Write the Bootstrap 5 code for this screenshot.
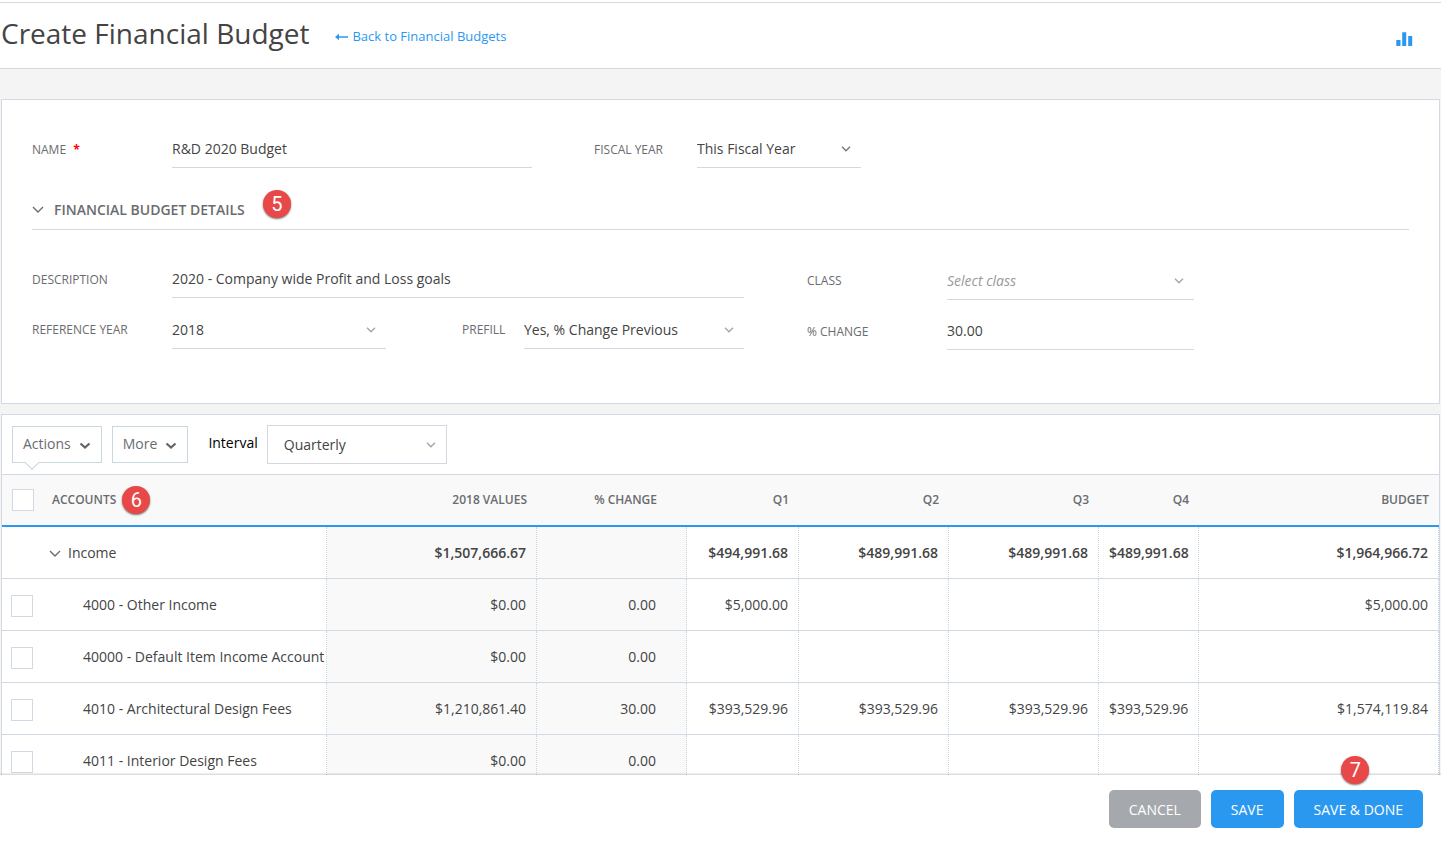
<!DOCTYPE html>
<html lang="en">
<head>
<meta charset="utf-8">
<meta name="viewport" content="width=device-width, initial-scale=1">
<title>Create Financial Budget</title>
<link rel="stylesheet" href="https://cdn.jsdelivr.net/npm/bootstrap@5.3.0/dist/css/bootstrap.min.css">
<style>
  :root {
    --line: #d3d9e2;
    --accent: #2b98f0;
    --ink: #444;
    --muted: #6a6c6f;
  }
  body {
    font-family: "Open Sans", "Noto Sans", sans-serif;
    font-size: 14px;
    line-height: 20px;
    color: var(--ink);
    background: #f4f4f4;
  }
  a { color: var(--accent); }

  .page-scroll { scrollbar-width: none; }
  .page-scroll::-webkit-scrollbar { display: none; }

  .head-wrap { background: #fff; padding-top: 2px; }
  .page-head {
    border-top: 1px solid var(--line);
    border-bottom: 1px solid var(--line);
    height: 67px;
    padding: 0 28px 0 1px;
  }
  .page-head h1 { font-size: 28px; line-height: 60px; }
  .back-link { font-size: 13px; line-height: 67px; margin-left: 26px; }
  .chart-link { padding-top: 6px; }

  .panel { background: #fff; border: 1px solid var(--line); margin: 0 1px; }
  .panel-form { margin-top: 30px; padding: 30px 30px 53px; }
  .panel-table { margin-top: 10px; border-bottom: 0; }

  /* Form grids */
  .grid-top { display: grid; grid-template-columns: 140px 360fr 165px 164fr 548fr; align-items: center; }
  .grid-details { display: grid; grid-template-columns: 712fr 63px 387fr 215fr; margin-top: 30px; align-items: start; }
  .stack-right { grid-column: 3; padding-top: 2px; row-gap: 12px; }
  .stack-left { row-gap: 13px; }
  .field-row { display: grid; grid-template-columns: 140px 1fr; align-items: center; }
  .field-trio { grid-template-columns: 140px 214fr 138px 220fr; }
  .cap { font-size: 12px; color: var(--muted); text-transform: uppercase; }
  .cap-low { padding-top: 2px; }
  .cap-fiscal { padding-left: 62px; }
  .cap-prefill { padding-left: 76px; }
  .required { color: #f00; font-weight: 700; margin-left: 4px; }

  .line-field {
    font-size: 14px;
    line-height: 20px;
    height: 38px;
    color: var(--ink);
    border: 0;
    border-bottom: 1px solid var(--line);
    border-radius: 0;
    background-color: transparent;
    padding: 8px 0 9px;
  }
  select.line-field { padding: 9px 0 8px; }
  .form-select {
    background-image: url("data:image/svg+xml,%3Csvg xmlns='http://www.w3.org/2000/svg' viewBox='0 0 10 6'%3E%3Cpath d='M1 .8l4 4 4-4' fill='none' stroke='%23a3a7ab' stroke-width='1.4'/%3E%3C/svg%3E");
    background-size: 10px 6px;
    background-position: right 10px center;
  }
  .dark-arrow {
    background-image: url("data:image/svg+xml,%3Csvg xmlns='http://www.w3.org/2000/svg' viewBox='0 0 10 6'%3E%3Cpath d='M1 .8l4 4 4-4' fill='none' stroke='%2377797c' stroke-width='1.4'/%3E%3C/svg%3E");
  }
  .unset { font-style: italic; color: #999; }

  .section-head {
    height: 40px;
    margin-top: 22px;
    border-bottom: 1px solid var(--line);
  }
  .section-head h2 { font-size: 14px; line-height: 20px; font-weight: 600; color: var(--muted); }
  .section-head svg { margin-right: 10px; }

  /* Numbered callouts */
  .callout {
    position: absolute;
    width: 28px;
    height: 28px;
    border-radius: 50%;
    background: #e84848;
    color: #fff;
    font: 400 20px/28px Roboto, Arial, sans-serif;
    text-align: center;
    box-shadow: 0 1px 2px rgba(0, 0, 0, .55);
  }
  .callout-section { left: 100%; bottom: 2px; margin-left: 18px; }
  .callout-head { left: 100%; top: -5px; margin-left: 6px; }
  .callout-done { left: 50%; top: -34px; margin-left: -17px; }

  /* Toolbar */
  .toolbar { height: 59px; padding: 0 10px; }
  .tool-btn {
    height: 37px;
    font-size: 14px;
    line-height: 20px;
    color: var(--muted);
    background: #fff;
    border: 1px solid #c8d7e0;
    border-radius: 0;
    padding: 0 10px 2px;
  }
  .tool-btn + .tool-btn { margin-left: 10px; }
  .tool-btn svg { margin: 5px 0 0 8px; }
  .has-notch::after {
    content: "";
    position: absolute;
    left: 14px;
    bottom: -6px;
    width: 10px;
    height: 10px;
    background: #fff;
    border: solid #c8d7e0;
    border-width: 0 1px 1px 0;
    transform: rotate(45deg);
  }
  .interval-label { color: #000; margin: 0 9px 3px 20px; }
  .interval-select {
    width: 180px;
    height: 39px;
    font-size: 14px;
    line-height: 20px;
    color: var(--ink);
    border: 1px solid var(--line);
    border-radius: 0;
    padding: 0 30px 0 16px;
  }

  /* Budget table */
  .budget { table-layout: fixed; width: 100%; border-collapse: separate; border-spacing: 0; }
  .budget th, .budget td { text-align: right; white-space: nowrap; vertical-align: middle; }
  .budget thead th {
    height: 53px;
    font-size: 12px;
    font-weight: 600;
    color: var(--muted);
    background: #f9f9f9;
    border-top: 1px solid var(--line);
    border-bottom: 2px solid var(--accent);
    padding: 0 10px;
  }
  .budget tbody th, .budget tbody td {
    height: 52px;
    padding: 0 10px;
    font-weight: 400;
    border-bottom: 1px solid var(--line);
    border-right: 1px dotted #c9d5e3;
  }
  .budget tbody td:first-child { border-right: 0; padding: 2px 0 0 9px; }
  .budget .total td { font-weight: 600; }
  .budget tr > :nth-child(4) { padding-right: 30px; }
  .budget .shade { background: #f9f9f9; }
  .budget thead .pick-cell { text-align: left; }
  .budget .name { text-align: left; }
  .budget tbody .name { padding: 0 0 0 41px; }
  .budget tbody .total .name { padding-left: 7px; }
  .total .name svg { margin-right: 7px; }
  .budget td:first-child { text-align: left; }
  .pick {
    width: 22px;
    height: 22px;
    margin: 0;
    display: block;
    border: 1px solid var(--line);
    border-radius: 0 !important;
    background-color: #fff;
  }

  /* Footer actions */
  .action-bar {
    position: relative;
    z-index: 1;
    gap: 10px;
    background: #fff;
    padding: 15px 18px;
    box-shadow: 0 -1px 2px rgba(0, 0, 0, .2);
  }
  .act {
    height: 38px;
    font-size: 14px;
    line-height: 20px;
    color: #fff;
    border: 0;
    border-radius: 5px;
    padding: 1px 20px 0;
    background: var(--accent);
  }
  .act-cancel { background: #a5a8ad; }
  .act:hover { color: #fff; background: #1f86da; }
</style>
</head>
<body class="vh-100 d-flex flex-column overflow-hidden">
<main class="page-scroll flex-grow-1 overflow-auto">
  <div class="head-wrap">
    <header class="page-head d-flex justify-content-between">
      <div class="d-flex">
        <h1 class="m-0 fw-normal">Create Financial Budget</h1>
        <a class="back-link text-decoration-none" href="#budgets"><svg width="13" height="10" viewBox="0 0 13 10" class="me-1" aria-hidden="true"><path d="M0 4l4-3.300v2.500h9v1.600H4v2.500z" fill="#2b98f0"/></svg>Back to Financial Budgets</a>
      </div>
      <a href="#chart" class="chart-link align-self-center" aria-label="Chart"><svg class="d-block" width="17" height="14" viewBox="0 0 17 14" aria-hidden="true"><path d="M.3 8h4.200v6H.3zM6.200 .2h4v13.800h-4zM12.200 4h4v10h-4z" fill="#2b98f0"/></svg></a>
    </header>
  </div>

  <form class="panel panel-form">
    <div class="grid-top">
      <label class="cap cap-low" for="name">Name <span class="required">*</span></label>
      <input class="form-control line-field" id="name" type="text" value="R&amp;D 2020 Budget">
      <label class="cap cap-low cap-fiscal" for="fiscal">Fiscal Year</label>
      <select class="form-select line-field dark-arrow" id="fiscal"><option>This Fiscal Year</option></select>
    </div>

    <div class="section-head d-flex align-items-center">
      <svg width="12" height="8" viewBox="0 0 12 8" aria-hidden="true"><path d="M1 1l5 5 5-5" fill="none" stroke="#6a6c6f" stroke-width="1.4"/></svg>
      <h2 class="m-0 position-relative">FINANCIAL BUDGET DETAILS<span class="callout callout-section">5</span></h2>
    </div>

    <div class="grid-details">
      <div class="stack-left d-grid">
        <div class="field-row">
          <label class="cap cap-low" for="desc">Description</label>
          <input class="form-control line-field" id="desc" type="text" value="2020 - Company wide Profit and Loss goals">
        </div>
        <div class="field-row field-trio">
          <label class="cap" for="refyear">Reference Year</label>
          <select class="form-select line-field" id="refyear"><option>2018</option></select>
          <label class="cap cap-prefill" for="prefill">Prefill</label>
          <select class="form-select line-field" id="prefill"><option>Yes, % Change Previous</option></select>
        </div>
      </div>
      <div class="stack-right d-grid">
        <div class="field-row">
          <label class="cap" for="class">Class</label>
          <select class="form-select line-field unset" id="class"><option>Select class</option></select>
        </div>
        <div class="field-row">
          <label class="cap cap-low" for="change">% Change</label>
          <input class="form-control line-field" id="change" type="text" value="30.00">
        </div>
      </div>
    </div>
  </form>

  <section class="panel panel-table">
    <div class="toolbar d-flex align-items-center">
      <button type="button" class="btn tool-btn has-notch position-relative d-flex align-items-center">Actions<svg width="12" height="8" viewBox="0 0 12 8" aria-hidden="true"><path d="M1.500 1.500L6 5.500l4.500-4" fill="none" stroke="#626569" stroke-width="2.300"/></svg></button>
      <button type="button" class="btn tool-btn d-flex align-items-center">More<svg width="12" height="8" viewBox="0 0 12 8" aria-hidden="true"><path d="M1.500 1.500L6 5.500l4.500-4" fill="none" stroke="#626569" stroke-width="2.300"/></svg></button>
      <label class="interval-label" for="interval">Interval</label>
      <select class="form-select interval-select" id="interval"><option>Quarterly</option></select>
    </div>

    <table class="budget">
      <colgroup>
        <col style="width:40px"><col style="width:285px"><col style="width:210px"><col style="width:150px">
        <col style="width:112px"><col style="width:150px"><col style="width:150px"><col style="width:100px"><col>
      </colgroup>
      <thead>
        <tr>
          <th class="pick-cell"><input type="checkbox" class="form-check-input pick" aria-label="Select all"></th>
          <th class="name"><span class="position-relative">ACCOUNTS<span class="callout callout-head">6</span></span></th>
          <th>2018 VALUES</th><th>% CHANGE</th><th>Q1</th><th>Q2</th><th>Q3</th><th>Q4</th><th>BUDGET</th>
        </tr>
      </thead>
      <tbody>
        <tr class="total">
          <td></td>
          <th class="name" scope="row"><svg width="12" height="8" viewBox="0 0 12 8" aria-hidden="true"><path d="M1 1l5 5 5-5" fill="none" stroke="#6a6c6f" stroke-width="1.400"/></svg>Income</th>
          <td class="shade">$1,507,666.67</td><td class="shade"></td><td>$494,991.68</td><td>$489,991.68</td><td>$489,991.68</td><td>$489,991.68</td><td>$1,964,966.72</td>
        </tr>
        <tr>
          <td><input type="checkbox" class="form-check-input pick" aria-label="Select 4000"></td>
          <th class="name" scope="row">4000 - Other Income</th>
          <td class="shade">$0.00</td><td class="shade">0.00</td><td>$5,000.00</td><td></td><td></td><td></td><td>$5,000.00</td>
        </tr>
        <tr>
          <td><input type="checkbox" class="form-check-input pick" aria-label="Select 40000"></td>
          <th class="name" scope="row">40000 - Default Item Income Account</th>
          <td class="shade">$0.00</td><td class="shade">0.00</td><td></td><td></td><td></td><td></td><td></td>
        </tr>
        <tr>
          <td><input type="checkbox" class="form-check-input pick" aria-label="Select 4010"></td>
          <th class="name" scope="row">4010 - Architectural Design Fees</th>
          <td class="shade">$1,210,861.40</td><td class="shade">30.00</td><td>$393,529.96</td><td>$393,529.96</td><td>$393,529.96</td><td>$393,529.96</td><td>$1,574,119.84</td>
        </tr>
        <tr>
          <td><input type="checkbox" class="form-check-input pick" aria-label="Select 4011"></td>
          <th class="name" scope="row">4011 - Interior Design Fees</th>
          <td class="shade">$0.00</td><td class="shade">0.00</td><td></td><td></td><td></td><td></td><td></td>
        </tr>
      </tbody>
    </table>
  </section>
</main>

<footer class="action-bar d-flex justify-content-end">
  <button type="button" class="btn act act-cancel">CANCEL</button>
  <button type="button" class="btn act">SAVE</button>
  <div class="position-relative">
    <button type="button" class="btn act">SAVE &amp; DONE</button>
    <span class="callout callout-done">7</span>
  </div>
</footer>
<script src="https://cdn.jsdelivr.net/npm/bootstrap@5.3.0/dist/js/bootstrap.bundle.min.js"></script>
</body>
</html>
